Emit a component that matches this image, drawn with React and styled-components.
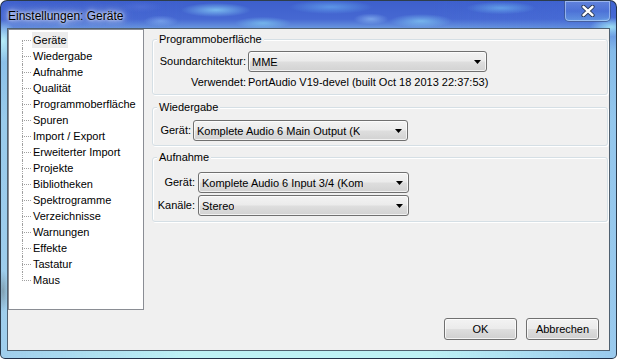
import React from "react";
import styled, { createGlobalStyle } from "styled-components";

const GlobalStyle = createGlobalStyle`
  html, body { margin: 0; padding: 0; background: #ffffff; }
  body { font-family: "Liberation Sans", Arial, sans-serif; font-size: 11px; color: #000; }
  #root { width: 617px; height: 359px; }
  * { box-sizing: border-box; }
`;

const Window = styled.div`
  position: relative;
  width: 617px;
  height: 359px;
  border: 1px solid rgba(30, 42, 58, 0.9);
  border-radius: 7px 7px 5px 5px;
  padding: 0 6px 7px;
  display: flex;
  flex-direction: column;
  overflow: hidden;
  background:
    radial-gradient(50px 10px at 215px 9px, rgba(150, 230, 255, 0.65), transparent 70%),
    radial-gradient(40px 9px at 262px 22px, rgba(140, 225, 250, 0.55), transparent 70%),
    radial-gradient(60px 10px at 330px 6px, rgba(120, 200, 255, 0.5), transparent 70%),
    radial-gradient(25px 8px at 370px 18px, rgba(170, 220, 255, 0.5), transparent 70%),
    radial-gradient(45px 10px at 420px 20px, rgba(150, 235, 255, 0.55), transparent 70%),
    radial-gradient(50px 9px at 500px 7px, rgba(130, 215, 255, 0.5), transparent 70%),
    radial-gradient(25px 8px at 160px 20px, rgba(160, 210, 255, 0.45), transparent 70%),
    radial-gradient(30px 8px at 140px 6px, rgba(90, 120, 220, 0.5), transparent 70%),
    radial-gradient(30px 14px at 610px 26px, rgba(170, 240, 250, 0.8), transparent 70%),
    radial-gradient(20px 30px at 2px 40px, rgba(190, 245, 250, 0.9), transparent 70%),
    radial-gradient(8px 30px at 2px 290px, rgba(110, 130, 140, 0.6), transparent 70%),
    linear-gradient(90deg, rgba(70, 100, 210, 0.25), rgba(60, 90, 210, 0) 30%, rgba(60, 90, 210, 0) 70%, rgba(70, 110, 220, 0.3)),
    linear-gradient(180deg, #3d5fcc 0px, #4668d2 18px, #6c9be0 28px, #9fdcef 50px, #b4ecf3 120px, #bdf1f5 100%);
`;

const TitleBar = styled.div`
  height: 27px;
  flex: 0 0 27px;
  display: flex;
  align-items: center;
  justify-content: space-between;
  padding-left: 1px;
`;

const TitleText = styled.span`
  font-family: "Liberation Sans", Arial, sans-serif;
  font-size: 12px;
  color: #000;
  padding-top: 2px;
  text-shadow: 0 0 6px rgba(255, 255, 255, 0.95), 0 0 12px rgba(230, 245, 255, 0.9), 0 0 3px rgba(255, 255, 255, 0.9);
`;

const CloseButton = styled.div`
  align-self: flex-start;
  margin-right: -1px;
  width: 47px;
  height: 21px;
  display: flex;
  align-items: center;
  justify-content: center;
  border: 1px solid rgba(40, 60, 110, 0.55);
  border-top: none;
  border-radius: 0 0 5px 5px;
  box-shadow: inset 0 0 0 1px rgba(210, 230, 255, 0.5);
  background: linear-gradient(180deg, rgba(140, 170, 235, 0.45), rgba(100, 140, 225, 0.3) 50%, rgba(130, 200, 240, 0.45));
`;

const Client = styled.div`
  flex: 1;
  display: flex;
  flex-direction: column;
  border: 1px solid #4f6070;
  background: #f0f0f0;
`;

const Main = styled.div`
  display: flex;
  align-items: flex-start;
`;

const TreeBox = styled.div`
  width: 136px;
  height: 281px;
  flex: 0 0 136px;
  background: #ffffff;
  border: 1px solid #8a8d94;
  padding-top: 2px;
`;

const TreeList = styled.div`
  margin-left: 13px;
`;

const TreeRow = styled.div`
  position: relative;
  height: 16px;
  display: flex;
  align-items: center;
  padding-left: 10px;

  &::before {
    content: "";
    position: absolute;
    left: 0;
    top: 8px;
    width: 9px;
    border-top: 1px dotted #a0a0a0;
  }

  &::after {
    content: "";
    position: absolute;
    left: 0;
    top: ${(p) => (p.$first ? "8px" : "0")};
    height: ${(p) => (p.$last ? "9px" : p.$first ? "8px" : "16px")};
    border-left: 1px dotted #a0a0a0;
  }
`;

const TreeLabel = styled.span`
  line-height: 16px;
  padding: 0 1px;
  white-space: nowrap;
  background: ${(p) => (p.$selected ? "#ececec" : "transparent")};
`;

const RightCol = styled.div`
  flex: 1;
  margin-left: 8px;
  padding-right: 1px;
  display: flex;
  flex-direction: column;
`;

const Group = styled.div`
  position: relative;
  margin-top: ${(p) => p.$mt}px;
  border: 1px solid #d5dfe5;
  border-radius: 3px;
  box-shadow: inset 1px 1px 0 #ffffff, 1px 1px 0 #ffffff;
`;

const Caption = styled.span`
  position: absolute;
  top: -7px;
  left: 4px;
  padding: 0 2px;
  line-height: 13px;
  background: #f0f0f0;
`;

const FormGrid = styled.div`
  display: grid;
  grid-template-columns: ${(p) => p.$label}px auto;
  column-gap: ${(p) => p.$gap}px;
  row-gap: ${(p) => p.$rowGap}px;
  align-items: center;
  justify-content: start;
  padding: ${(p) => p.$pad};
`;

const Label = styled.span`
  text-align: right;
  white-space: nowrap;
  line-height: 13px;
`;

const Value = styled.span`
  white-space: nowrap;
  line-height: 13px;
`;

const Combo = styled.div`
  width: ${(p) => p.$w}px;
  height: 21px;
  display: flex;
  align-items: center;
  justify-content: space-between;
  padding: 0 5px 0 3px;
  border: 1px solid #707070;
  border-radius: 3px;
  background: linear-gradient(180deg, #f3f3f3 0%, #ebebeb 48%, #dedede 52%, #d2d2d2 100%);
  box-shadow: inset 0 0 0 1px rgba(255, 255, 255, 0.7);
  overflow: hidden;
`;

const ComboText = styled.span`
  white-space: nowrap;
  overflow: hidden;
`;

const Footer = styled.div`
  display: flex;
  justify-content: flex-end;
  gap: 9px;
  padding: 8px 10px 10px 0;
`;

const Button = styled.button`
  width: 73px;
  height: 22px;
  padding: 0;
  font-family: "Liberation Sans", Arial, sans-serif;
  font-size: 11px;
  color: #000;
  border: 1px solid #707070;
  border-radius: 3px;
  background: linear-gradient(180deg, #f3f3f3 0%, #ebebeb 48%, #dedede 52%, #d0d0d0 100%);
  box-shadow: inset 0 0 0 1px rgba(255, 255, 255, 0.75);
`;

const Arrow = () => (
  <svg width="7" height="4" viewBox="0 0 7 4">
    <polygon points="0,0 7,0 3.5,4" fill="#000" />
  </svg>
);

const CloseGlyph = () => (
  <svg width="14" height="12" viewBox="0 0 14 12">
    <path d="M2.5 1.8 L11.5 10.2 M11.5 1.8 L2.5 10.2" stroke="#2b3a55" strokeWidth="4.2" strokeLinecap="round" />
    <path d="M2.5 1.8 L11.5 10.2 M11.5 1.8 L2.5 10.2" stroke="#ffffff" strokeWidth="2.4" strokeLinecap="round" />
  </svg>
);

const treeItems = [
  "Geräte",
  "Wiedergabe",
  "Aufnahme",
  "Qualität",
  "Programmoberfläche",
  "Spuren",
  "Import / Export",
  "Erweiterter Import",
  "Projekte",
  "Bibliotheken",
  "Spektrogramme",
  "Verzeichnisse",
  "Warnungen",
  "Effekte",
  "Tastatur",
  "Maus",
];

export default function App() {
  return (
    <>
      <GlobalStyle />
      <Window>
        <TitleBar>
          <TitleText>Einstellungen: Geräte</TitleText>
          <CloseButton>
            <CloseGlyph />
          </CloseButton>
        </TitleBar>
        <Client>
          <Main>
            <TreeBox>
              <TreeList>
                {treeItems.map((t, i) => (
                  <TreeRow key={t} $first={i === 0} $last={i === treeItems.length - 1}>
                    <TreeLabel $selected={i === 0}>{t}</TreeLabel>
                  </TreeRow>
                ))}
              </TreeList>
            </TreeBox>
            <RightCol>
              <Group $mt={10}>
                <Caption>Programmoberfläche</Caption>
                <FormGrid $label={88} $gap={2} $rowGap={4} $pad="11px 0 5px 5px">
                  <Label>Soundarchitektur:</Label>
                  <Combo $w={239}>
                    <ComboText>MME</ComboText>
                    <Arrow />
                  </Combo>
                  <Label>Verwendet:</Label>
                  <Value>PortAudio V19-devel (built Oct 18 2013 22:37:53)</Value>
                </FormGrid>
              </Group>
              <Group $mt={12}>
                <Caption>Wiedergabe</Caption>
                <FormGrid $label={33} $gap={2} $rowGap={2} $pad="12px 0 4px 5px">
                  <Label>Gerät:</Label>
                  <Combo $w={215}>
                    <ComboText>Komplete Audio 6 Main Output (K</ComboText>
                    <Arrow />
                  </Combo>
                </FormGrid>
              </Group>
              <Group $mt={11}>
                <Caption>Aufnahme</Caption>
                <FormGrid $label={38} $gap={3} $rowGap={2} $pad="14px 0 5px 4px">
                  <Label>Gerät:</Label>
                  <Combo $w={211}>
                    <ComboText>Komplete Audio 6 Input 3/4 (Kom</ComboText>
                    <Arrow />
                  </Combo>
                  <Label>Kanäle:</Label>
                  <Combo $w={211}>
                    <ComboText>Stereo</ComboText>
                    <Arrow />
                  </Combo>
                </FormGrid>
              </Group>
            </RightCol>
          </Main>
          <Footer>
            <Button>OK</Button>
            <Button>Abbrechen</Button>
          </Footer>
        </Client>
      </Window>
    </>
  );
}
